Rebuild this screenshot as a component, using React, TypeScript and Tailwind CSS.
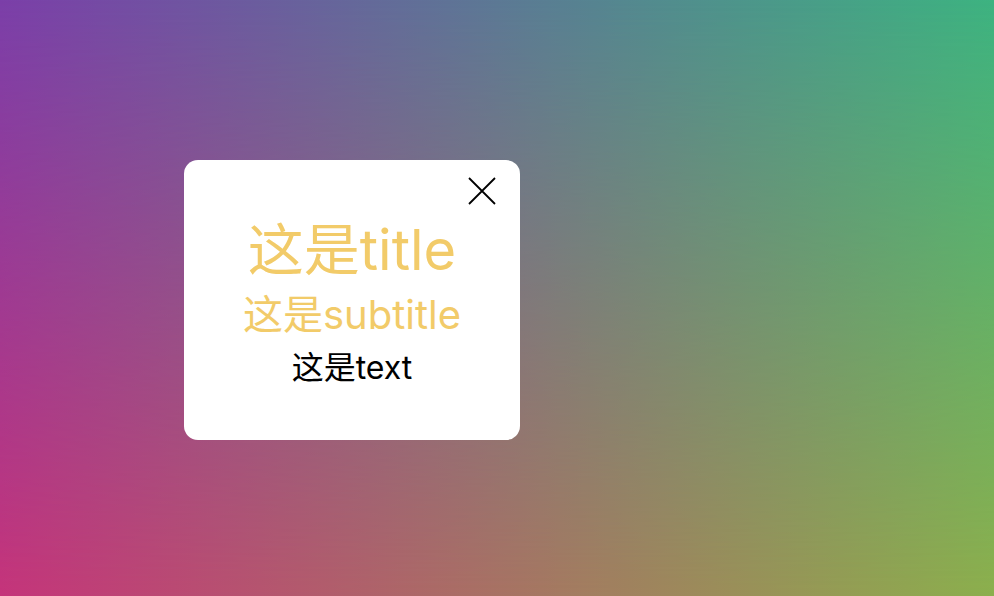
const font = "font-['Inter','Noto_Sans_CJK_SC',sans-serif]";

const CloseIcon = () => (
  <svg width="28" height="28" viewBox="0 0 28 28" fill="none" stroke="black" strokeWidth="1.8">
    <path d="M1 1L27 27M27 1L1 27" />
  </svg>
);

const Modal = () => {
  return (
    <div className={`relative flex h-[280px] w-[336px] flex-col items-center rounded-[14px] bg-white pt-[60px] ${font}`}>
      <button className="absolute right-[24px] top-[17px]">
        <CloseIcon />
      </button>

      <p className="text-[56px] leading-[60px] text-[#f2cb69]">这是title</p>
      <p className="mt-[12px] text-[40px] leading-[46px] text-[#f2cb69]">这是subtitle</p>
      <p className="mt-[12px] text-[32px] leading-[36px] text-black">这是text</p>
    </div>
  );
};

export default function App() {
  return (
    <div className="relative h-[596px] w-full overflow-hidden bg-[linear-gradient(to_right,#7b3fa9,#3db381)]">
      <div className="absolute inset-0 bg-[linear-gradient(to_right,#c5347a,#8caf4c)] [mask-image:linear-gradient(to_bottom,transparent,black)]" />
      <div className="relative pl-[184px] pt-[160px]">
        <Modal />
      </div>
    </div>
  );
}
